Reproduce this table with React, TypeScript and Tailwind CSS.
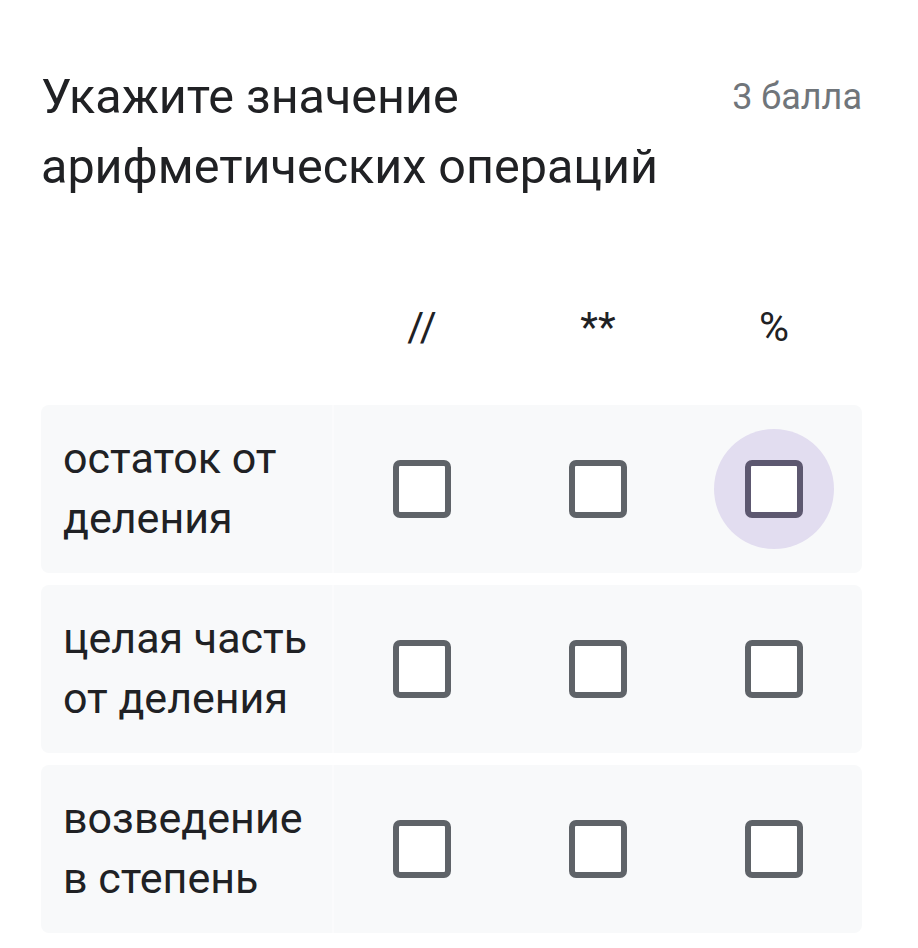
const columns = ["//", "**", "%"];

const rows = [
  ["остаток от", "деления"],
  ["целая часть", "от деления"],
  ["возведение", "в степень"],
];

function Checkbox({ hover }: { hover?: boolean }) {
  return (
    <div className="relative flex h-[120px] w-[120px] items-center justify-center">
      {hover && <div className="absolute inset-0 rounded-full bg-[#e2ddf0]" />}
      <div
        className={
          "relative h-[58px] w-[58px] rounded-[7px] border-[6px] bg-white " +
          (hover ? "border-[#5d5870]" : "border-[#5f6368]")
        }
      />
    </div>
  );
}

export default function App() {
  return (
    <div
      className="min-h-[948px] bg-white text-[#202124]"
      style={{ fontFamily: "Roboto, 'Noto Sans', sans-serif" }}
    >
      <div className="ml-[41px] w-[821px] pt-[62px]">
        <div className="flex items-start justify-between">
          <div className="text-[48.5px] leading-[70px]">
            Укажите значение
            <br />
            арифметических операций
          </div>
          <div className="text-[36px] leading-[70px] text-[#70757a]">3 балла</div>
        </div>

        <div className="mt-[85px] grid h-[80px] grid-cols-[293px_1fr_1fr_1fr] items-center">
          <div />
          {columns.map((c) => (
            <div key={c} className="text-center text-[41px] leading-[58px]">
              {c}
            </div>
          ))}
        </div>

        <div className="mt-[38px] flex flex-col gap-3">
          {rows.map((r, i) => (
            <div
              key={i}
              className="grid h-[168px] grid-cols-[293px_1fr_1fr_1fr] items-center rounded-[8px] bg-[#f8f9fa]"
            >
              <div className="flex h-full flex-col justify-center border-r-2 border-[#fbfbfc] pb-[2px] pl-[22px] text-[43px] leading-[60px]">
                <span>{r[0]}</span>
                <span>{r[1]}</span>
              </div>
              {columns.map((c, j) => (
                <div key={c} className="flex justify-center">
                  <Checkbox hover={i === 0 && j === 2} />
                </div>
              ))}
            </div>
          ))}
        </div>
      </div>
    </div>
  );
}
